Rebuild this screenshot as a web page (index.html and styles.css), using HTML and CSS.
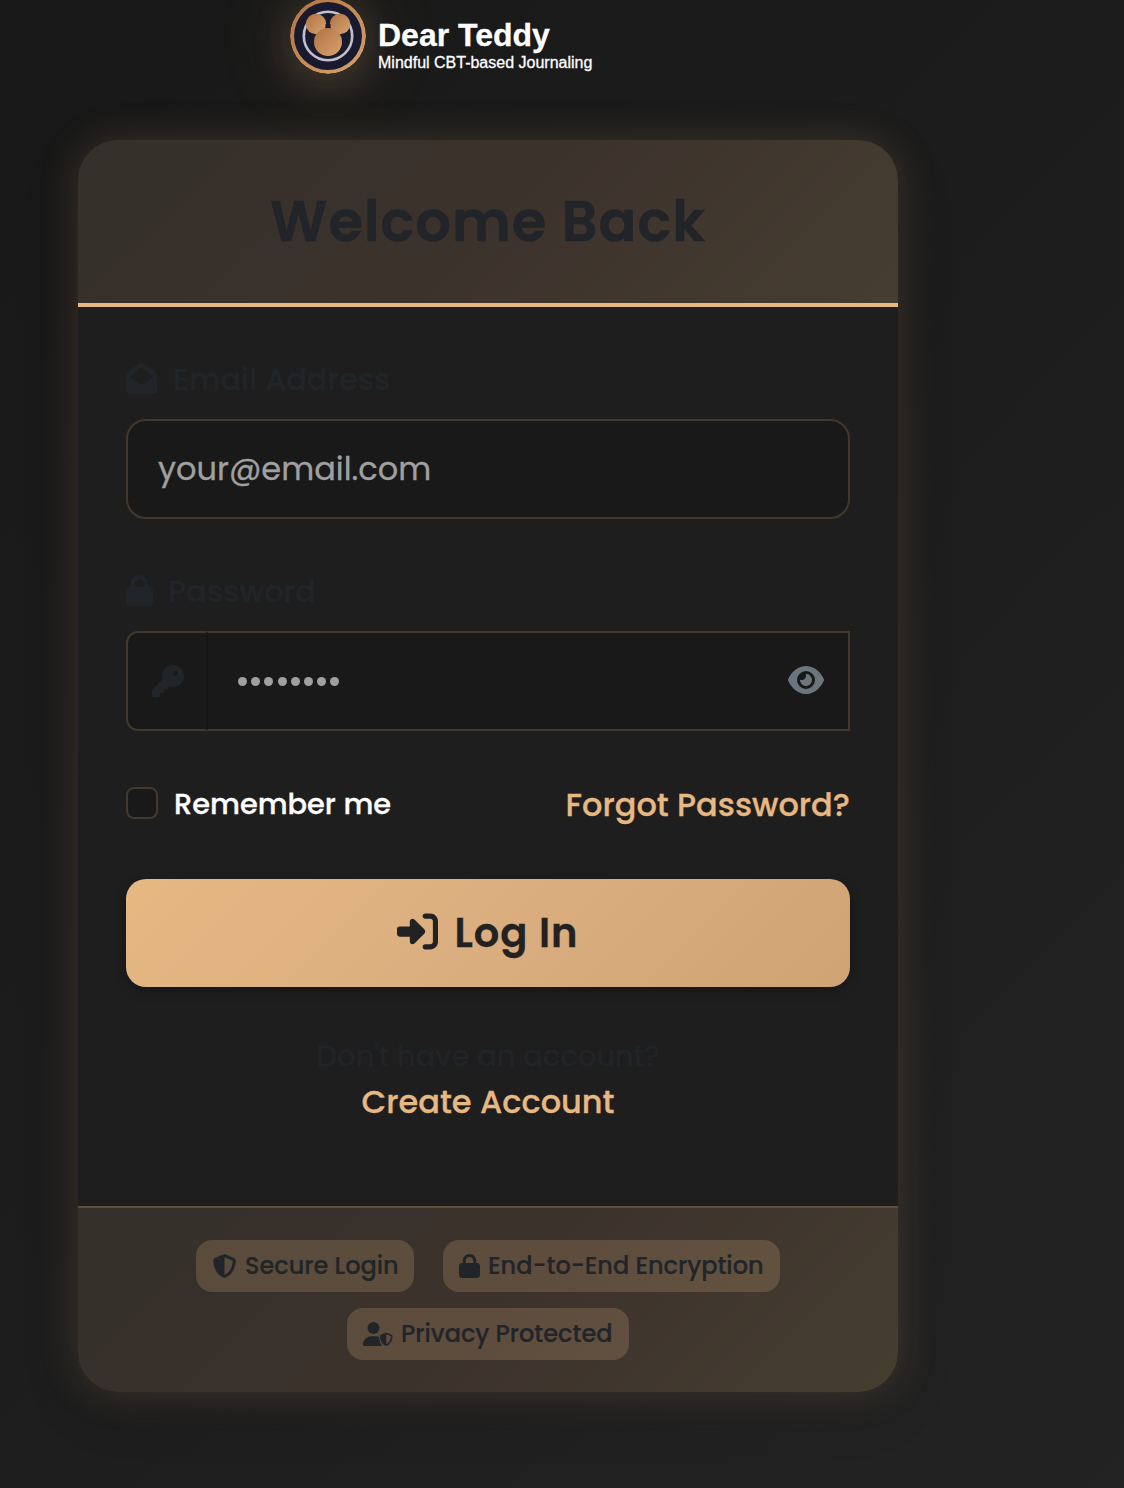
FILE: index.html
```html
<!DOCTYPE html>
<html lang="en">
<head>
<meta charset="utf-8">
<title>Dear Teddy – Log In</title>
<link rel="stylesheet" href="styles.css">
</head>
<body>
<svg class="sprite" aria-hidden="true">
  <symbol id="lock" viewBox="0 0 448 512"><path d="M144 144v48H304V144c0-44.200-35.800-80-80-80s-80 35.800-80 80zM80 192V144C80 64.500 144.500 0 224 0s144 64.500 144 144v48h16c35.300 0 64 28.700 64 64V448c0 35.300-28.700 64-64 64H64c-35.300 0-64-28.700-64-64V256c0-35.300 28.700-64 64-64H80z"/></symbol>
  <symbol id="shield" viewBox="0 0 512 512"><path d="M256 0c4.600 0 9.200 1 13.400 2.900L457.700 82.800c22 9.300 38.400 31 38.300 57.200c-.5 99.200-41.300 280.700-213.600 363.200c-16.700 8-36.100 8-52.800 0C57.300 420.700 16.500 239.200 16 140c-.1-26.200 16.300-47.900 38.300-57.200L242.700 2.900C246.800 1 251.400 0 256 0zm0 66.800V444.800C394 378 431.100 230.100 432 141.400L256 66.800z"/></symbol>
</svg>
<main class="page">
  <header class="brand">
    <svg class="logo" viewBox="0 0 76 76">
      <defs><linearGradient id="fur" x1="0" y1="0" x2="1" y2="1"><stop offset="0" stop-color="#b27142"/><stop offset="1" stop-color="#d6a36f"/></linearGradient></defs>
      <circle cx="38" cy="38" r="38" fill="url(#fur)"/>
      <circle cx="38" cy="38" r="34" fill="#1a1a2e"/>
      <circle cx="38" cy="38" r="24.200" fill="none" stroke="#c2c1ca" stroke-width="2.600"/>
      <circle cx="26" cy="26" r="10.200" fill="url(#fur)"/><circle cx="50" cy="26" r="10.200" fill="url(#fur)"/>
      <rect x="35.500" y="26" width="5" height="6" fill="#1a1a2e"/>
      <circle cx="38" cy="44" r="14" fill="url(#fur)"/>
    </svg>
    <div class="brand-text">
      <div class="brand-name">Dear Teddy</div>
      <div class="tagline">Mindful CBT-based Journaling</div>
    </div>
  </header>

  <section class="card">
    <div class="card-head"><h1 class="title">Welcome Back</h1></div>
    <form class="card-body">
      <label class="label"><svg class="icon-mail" viewBox="0 0 31 31"><path fill-rule="evenodd" d="M15.500 0Q17 0 18.500 1L29.500 9Q31 10 31 12V27Q31 31 27 31H4Q0 31 0 27V12Q0 10 1.500 9L12.500 1Q14 0 15.500 0ZM4 14L13 20.500Q15.500 22.500 18 20.500L27 14 17 5.500Q15.500 4.300 14 5.500Z"/></svg><span>Email Address</span></label>
      <div class="input"><span>your@email.com</span></div>

      <label class="label label-password"><svg class="icon-lock"><use href="#lock"/></svg><span>Password</span></label>
      <div class="password">
        <div class="addon"><svg class="icon-key" viewBox="0 0 512 512"><path d="M336 352c97.200 0 176-78.800 176-176S433.200 0 336 0S160 78.800 160 176c0 18.700 2.900 36.800 8.300 53.700L7 391c-4.500 4.500-7 10.600-7 17v80c0 13.300 10.700 24 24 24h80c13.300 0 24-10.700 24-24V448h40c13.300 0 24-10.700 24-24V384h40c6.400 0 12.500-2.500 17-7l33.300-33.300c16.900 5.400 35 8.300 53.700 8.300zM376 96a40 40 0 1 1 0 80 40 40 0 1 1 0-80z"/></svg></div>
        <div class="password-field">
          <span class="dots"><i></i><i></i><i></i><i></i><i></i><i></i><i></i><i></i></span>
          <svg class="icon-eye" viewBox="0 0 576 512"><path d="M288 32c-80.800 0-145.500 36.800-192.600 80.600C48.600 156 17.300 208 2.500 243.700c-3.300 7.900-3.300 16.700 0 24.600C17.300 304 48.600 356 95.400 399.400C142.500 443.200 207.200 480 288 480s145.500-36.800 192.600-80.600c46.800-43.500 78.100-95.400 93-131.100c3.300-7.900 3.300-16.700 0-24.600c-14.900-35.700-46.200-87.700-93-131.100C433.500 68.800 368.800 32 288 32zM144 256a144 144 0 1 1 288 0 144 144 0 1 1 -288 0zm144-64c0 35.300-28.700 64-64 64c-7.100 0-13.900-1.200-20.300-3.300c-5.500-1.800-11.900 1.600-11.700 7.400c.3 6.900 1.300 13.800 3.200 20.700c13.700 51.200 66.400 81.600 117.600 67.900s81.600-66.400 67.900-117.600c-11.100-41.500-47.800-69.400-88.600-71.100c-5.800-.2-9.200 6.100-7.400 11.700c2.100 6.400 3.300 13.200 3.300 20.300z"/></svg>
        </div>
      </div>

      <div class="options">
        <label class="remember"><span class="checkbox"></span><span class="remember-text">Remember me</span></label>
        <a class="link forgot">Forgot Password?</a>
      </div>

      <div class="login" role="button"><svg class="icon-login" viewBox="0 0 512 512"><path d="M217.900 105.900L340.700 228.700c7.200 7.200 11.300 17.100 11.300 27.300s-4.100 20.100-11.300 27.300L217.900 406.100c-6.400 6.400-15 9.900-24 9.900c-18.700 0-33.900-15.200-33.900-33.900l0-62.100L32 320c-17.700 0-32-14.300-32-32l0-64c0-17.700 14.300-32 32-32l128 0 0-62.100c0-18.700 15.200-33.900 33.900-33.900c9 0 17.600 3.600 24 9.900zM352 416l64 0c17.700 0 32-14.300 32-32l0-256c0-17.700-14.300-32-32-32l-64 0c-17.700 0-32-14.300-32-32s14.300-32 32-32l64 0c53 0 96 43 96 96l0 256c0 53-43 96-96 96l-64 0c-17.700 0-32-14.300-32-32s14.300-32 32-32z"/></svg><span>Log In</span></div>

      <div class="signup">
        <div class="ask">Don't have an account?</div>
        <a class="link create">Create Account</a>
      </div>
    </form>
    <footer class="card-foot">
      <div class="badge-row">
        <span class="badge badge-secure"><svg class="icon-shield"><use href="#shield"/></svg><span>Secure Login</span></span>
        <span class="badge badge-encryption"><svg class="icon-lock-small"><use href="#lock"/></svg><span>End-to-End Encryption</span></span>
      </div>
      <div class="badge-row">
        <span class="badge badge-privacy"><svg class="icon-user" viewBox="0 0 640 512"><circle cx="224" cy="128" r="128"/><path d="M178 304H270Q310 304 345 322V340Q350 440 405 512H30Q0 512 0 482C0 384 80 304 178 304Z"/><svg x="352" y="224" width="288" height="288" viewBox="0 0 512 512"><use href="#shield"/></svg></svg><span>Privacy Protected</span></span>
      </div>
    </footer>
  </section>
</main>
</body>
</html>
```
FILE: styles.css
```css
* { box-sizing: border-box; }
body {
  margin: 0;
  height: 1488px;
  overflow: hidden;
  background: linear-gradient(135deg, #181818 0%, #1d1d1d 50%, #232323 100%);
  color: #212529;
  font-family: Poppins, Inter, "Open Sans", sans-serif;
  font-weight: 500;
  -webkit-text-stroke: .3px currentColor;
}
svg { display: block; flex: none; fill: currentColor; }
span, a, .ask, .title { white-space: nowrap; }
.sprite { width: 0; height: 0; position: absolute; }
.page { width: 820px; margin-left: 78px; }

.brand { display: flex; height: 140px; padding-left: 212px; gap: 12px; }
.logo {
  width: 76px; height: 76px; margin-top: -2px; border-radius: 50%;
  box-shadow: 0 8px 40px rgba(222, 174, 122, .22), 0 0 90px rgba(222, 174, 122, .14);
}
.brand-text { padding-top: 16px; color: #fff; font-family: "Liberation Sans", Arial, sans-serif; white-space: nowrap; }
.brand-name { font-size: 32px; line-height: 38px; font-weight: 700; }
.tagline { font-size: 16px; line-height: 18px; font-weight: 400; }

.card {
  height: 1252px;
  display: flex; flex-direction: column;
  border-radius: 40px;
  overflow: hidden;
  background: #1e1e1e;
  box-shadow: 0 0 40px rgba(229, 184, 130, .17), 0 16px 64px rgba(0, 0, 0, .1);
}
.card-head {
  height: 167px;
  display: flex; align-items: center; justify-content: center;
  border-bottom: 4px solid #e6b882;
  background: linear-gradient(135deg, #34302a 0%, #3c322c 50%, #463d31 100%);
}
.title { margin: 0; font-size: 56px; line-height: 67px; font-weight: 600; letter-spacing: 1px; -webkit-text-stroke-width: .6px; }

.card-body { flex: 1; padding: 48px 48px 0; }
.label { display: flex; align-items: center; height: 48px; font-size: 30.4px; gap: 16px; }
.label span { padding-top: 1px; }
.icon-mail { width: 31px; height: 31px; margin-top: -2px; }
.icon-lock { width: 27px; height: 31px; margin-top: -2px; margin-right: -1px; }
.input {
  display: flex; align-items: center;
  height: 100px; margin-top: 16px; padding-left: 30px;
  border: 2px solid #42382d; border-radius: 20px;
  background: #191919; color: #a0a0a0;
  font-size: 32px; font-weight: 400;
}
.label-password { margin-top: 48px; }
.password { display: flex; height: 100px; margin-top: 16px; }
.addon {
  width: 80px; display: flex; align-items: center; justify-content: center;
  border: 2px solid #42382d; border-right: 0; border-radius: 12px 0 0 12px;
  background: #191919; padding-left: 2px;
}
.icon-key { width: 32px; height: 32px; }
.password-field {
  flex: 1; display: flex; align-items: center; justify-content: space-between;
  border: 2px solid #42382d; border-left-color: #151515;
  background: #191919; padding: 0 24px 0 30px;
}
.dots { display: flex; gap: 4.200px; }
.dots i { width: 9px; height: 9px; border-radius: 50%; background: #a0a0a0; }
.icon-eye { width: 36px; height: 32px; margin-top: -2px; color: #6c757d; }

.options { display: flex; justify-content: space-between; align-items: center; height: 48px; margin-top: 48px; }
.remember { display: flex; align-items: center; gap: 16px; color: #fff; font-size: 28.8px; }
.remember-text { padding-top: 2px; }
.checkbox { width: 32px; height: 32px; border: 2px solid #42382d; border-radius: 8px; background: #191919; }
.link { color: #e6b882; font-size: 32px; }
.forgot { padding-top: 4px; }

.login {
  display: flex; align-items: center; justify-content: center; gap: 16px;
  height: 108px; margin-top: 52px;
  border-radius: 20px;
  background: linear-gradient(135deg, #e6b882 0%, #daae7f 50%, #cfa373 100%);
  box-shadow: 0 4px 12px rgba(0, 0, 0, .3);
  color: #222; font-size: 40px; font-weight: 600; letter-spacing: 1px;
}
.icon-login { width: 41px; height: 41px; margin-top: -3px; }
.signup { display: flex; flex-direction: column; align-items: center; margin-top: 46px; }
.ask { font-size: 29px; line-height: 46px; font-weight: 400; }
.create { line-height: 46px; }

.card-foot {
  height: 186px; padding-top: 32px;
  display: flex; flex-direction: column; gap: 16px;
  border-top: 2px solid #5f4d3a;
  background: linear-gradient(135deg, #34302a 0%, #3c322c 50%, #463d31 100%);
}
.badge-row { display: flex; justify-content: center; gap: 29px; }
.badge {
  display: flex; align-items: center; gap: 8px; height: 52px; padding-left: 16px;
  border-radius: 16px; background: rgba(229, 184, 130, .2); font-size: 24px;
  -webkit-text-stroke-width: .2px;
}
.badge span { padding-bottom: 2px; }
.badge-secure { width: 218px; }
.badge-encryption { width: 337px; }
.badge-privacy { width: 282px; }
.icon-shield { width: 25px; height: 24px; }
.icon-lock-small { width: 21px; height: 24px; }
.icon-user { width: 30px; height: 24px; }
```
